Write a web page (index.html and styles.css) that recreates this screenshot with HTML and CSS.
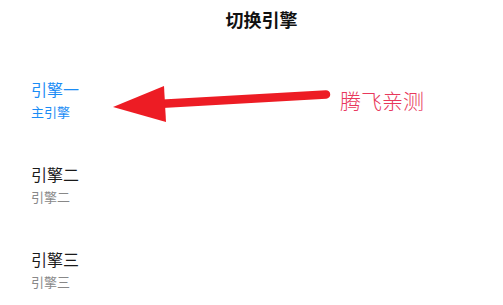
FILE: index.html
```html
<!DOCTYPE html>
<html lang="zh-CN">
<head>
<meta charset="utf-8">
<title>切换引擎</title>
<link rel="stylesheet" href="styles.css">
</head>
<body>
<div class="page">
  <header class="header"><h1 class="title">切换引擎</h1></header>
  <ul class="list">
    <li class="item active">
      <div class="name">引擎一</div>
      <div class="sub">主引擎</div>
    </li>
    <li class="item">
      <div class="name">引擎二</div>
      <div class="sub">引擎二</div>
    </li>
    <li class="item">
      <div class="name">引擎三</div>
      <div class="sub">引擎三</div>
    </li>
  </ul>
  <svg class="arrow" width="503" height="305" viewBox="0 0 503 305" aria-hidden="true">
    <line x1="158" y1="104" x2="326" y2="94.5" stroke="#ed1c24" stroke-width="8.5" stroke-linecap="round"/>
    <polygon points="113,107 164,86 166,122" fill="#ed1c24"/>
  </svg>
  <div class="note">腾飞亲测</div>
</div>
</body>
</html>
```
FILE: styles.css
```css
html, body {
  margin: 0;
  padding: 0;
  background: #fff;
}
.page {
  position: relative;
  width: 503px;
  height: 305px;
  overflow: hidden;
  font-family: "Noto Sans CJK SC", "Noto Sans", sans-serif;
}
.header {
  height: 38px;
  display: flex;
  align-items: center;
  justify-content: center;
  padding-left: 20px;
}
.title {
  margin: 0;
  font-size: 18px;
  line-height: 24px;
  font-weight: 700;
  color: #111;
}
.list {
  list-style: none;
  margin: 0;
  padding: 41px 0 0 31px;
  display: flex;
  flex-direction: column;
  gap: 43px;
}
.item {
  display: flex;
  flex-direction: column;
  gap: 4px;
}
.name {
  font-size: 16px;
  line-height: 20px;
  color: #1a1a1a;
}
.sub {
  font-size: 13px;
  line-height: 18px;
  color: #888;
}
.item.active .name,
.item.active .sub {
  color: #1a8cf5;
}
.arrow {
  position: absolute;
  left: 0;
  top: 0;
}
.note {
  position: absolute;
  left: 340px;
  top: 86px;
  font-size: 21px;
  line-height: 28px;
  font-weight: 300;
  color: #e8385c;
  letter-spacing: 0;
}
```
